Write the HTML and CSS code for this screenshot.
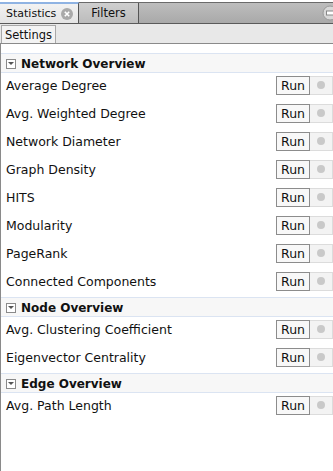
FILE: index.html
```html
<!DOCTYPE html>
<html lang="en">
<head>
    <meta charset="UTF-8">
    <title>Statistics</title>
    <link rel="stylesheet" href="styles.css">
</head>
<body>
    <div class="tabbar">
        <div class="tab active">
            Statistics
            <span class="close">
                <svg width="12" height="12" viewBox="0 0 12 12"><circle cx="6" cy="6" r="6" fill="#a9a9a9"/><path d="M3.8 3.8l4.4 4.4M8.2 3.8l-4.4 4.4" stroke="#fff" stroke-width="1.6"/></svg>
            </span>
        </div>
        <div class="tab">Filters</div>
        <div class="win-btn">
            <svg width="16" height="16" viewBox="0 0 16 16"><circle cx="8" cy="8" r="7" fill="#d8d8d8" stroke="#9a9a9a"/><rect x="4.5" y="6" width="7" height="4" fill="#fff" stroke="#888"/></svg>
        </div>
    </div>
    <div class="toolbar">
        <button class="tool-btn">Settings</button>
    </div>
    <div class="panel">
        <div class="section-head"><span class="toggle"></span>Network Overview</div>
        <div class="row"><span>Average Degree</span><div class="actions"><button class="run">Run</button><span class="status"><i></i></span></div></div>
        <div class="row"><span>Avg. Weighted Degree</span><div class="actions"><button class="run">Run</button><span class="status"><i></i></span></div></div>
        <div class="row"><span>Network Diameter</span><div class="actions"><button class="run">Run</button><span class="status"><i></i></span></div></div>
        <div class="row"><span>Graph Density</span><div class="actions"><button class="run">Run</button><span class="status"><i></i></span></div></div>
        <div class="row"><span>HITS</span><div class="actions"><button class="run">Run</button><span class="status"><i></i></span></div></div>
        <div class="row"><span>Modularity</span><div class="actions"><button class="run">Run</button><span class="status"><i></i></span></div></div>
        <div class="row"><span>PageRank</span><div class="actions"><button class="run">Run</button><span class="status"><i></i></span></div></div>
        <div class="row"><span>Connected Components</span><div class="actions"><button class="run">Run</button><span class="status"><i></i></span></div></div>

        <div class="section-head"><span class="toggle"></span>Node Overview</div>
        <div class="row"><span>Avg. Clustering Coefficient</span><div class="actions"><button class="run">Run</button><span class="status"><i></i></span></div></div>
        <div class="row"><span>Eigenvector Centrality</span><div class="actions"><button class="run">Run</button><span class="status"><i></i></span></div></div>

        <div class="section-head"><span class="toggle"></span>Edge Overview</div>
        <div class="row"><span>Avg. Path Length</span><div class="actions"><button class="run">Run</button><span class="status"><i></i></span></div></div>
    </div>
</body>
</html>
```

FILE: styles.css
```css
body {
    margin: 0;
    font-family: "DejaVu Sans", "Liberation Sans", sans-serif;
    font-size: 12px;
    color: #111;
    background-color: #fff;
    height: 471px;
    overflow: hidden;
}
.tabbar {
    margin-top: 2px;
    height: 20px;
    display: flex;
    align-items: stretch;
    border-top: 1px solid #6a6a6a;
    border-bottom: 1px solid #5a5a5a;
    background: linear-gradient(#bdbdbd, #a9a9a9);
    position: relative;
}
.tab {
    box-sizing: border-box;
    width: 60px;
    display: flex;
    align-items: center;
    justify-content: center;
    border-right: 1px solid #555;
    background: linear-gradient(#cfcfcf, #bcbcbc);
    font-size: 11.5px;
}
.tab.active {
    width: 79px;
    justify-content: flex-start;
    padding-left: 6px;
    margin-top: -1px;
    border-top: 2px solid #8fb3e3;
    background: linear-gradient(#f2f2f2, #e4e4e4);
    gap: 5px;
    font-size: 11px;
}
.close {
    display: flex;
}
.win-btn {
    position: absolute;
    right: -5px;
    top: 2px;
}
.toolbar {
    height: 18px;
    padding: 1px 0 0 1px;
    background-color: #e8e8e8;
    border-bottom: 1px solid #8a8a8a;
}
.tool-btn {
    height: 18px;
    width: 55px;
    padding: 0;
    border: 1px solid #a8a8a8;
    border-bottom: none;
    background-color: #f3f3f3;
    font-family: inherit;
    font-size: 11.5px;
    color: #111;
}
.panel {
    border-left: 1px solid #8a8a8a;
    height: 428px;
    padding-top: 9px;
}
.section-head {
    height: 17px;
    padding: 1px 0 0 5px;
    display: flex;
    align-items: center;
    gap: 5px;
    border-top: 1px solid #dbe4f2;
    border-bottom: 1px solid #dbe4f2;
    background-color: #f7f7f7;
    font-weight: bold;
    font-size: 12px;
}
.toggle {
    width: 8px;
    height: 8px;
    border: 1px solid #8a8a8a;
    background-color: #fff;
    position: relative;
}
.toggle::after {
    content: "";
    position: absolute;
    left: 1px;
    top: 2px;
    border-left: 3px solid transparent;
    border-right: 3px solid transparent;
    border-top: 3.5px solid #555;
}
.row {
    height: 22px;
    padding: 1px 0 5px 5px;
    display: flex;
    align-items: center;
    justify-content: space-between;
    font-size: 12.5px;
}
.actions {
    display: flex;
}
.run {
    width: 34px;
    height: 19px;
    padding: 0;
    border: 1px solid #8c8c8c;
    background-color: #f8f8f8;
    font-family: inherit;
    font-size: 12.5px;
    color: #111;
}
.status {
    width: 22px;
    height: 17px;
    display: flex;
    align-items: center;
    justify-content: center;
    border: 1px solid #dcdcdc;
    border-left: none;
    background-color: #f3f3f3;
}
.status i {
    width: 8px;
    height: 8px;
    border-radius: 50%;
    background-color: #c9c9c9;
}
```
